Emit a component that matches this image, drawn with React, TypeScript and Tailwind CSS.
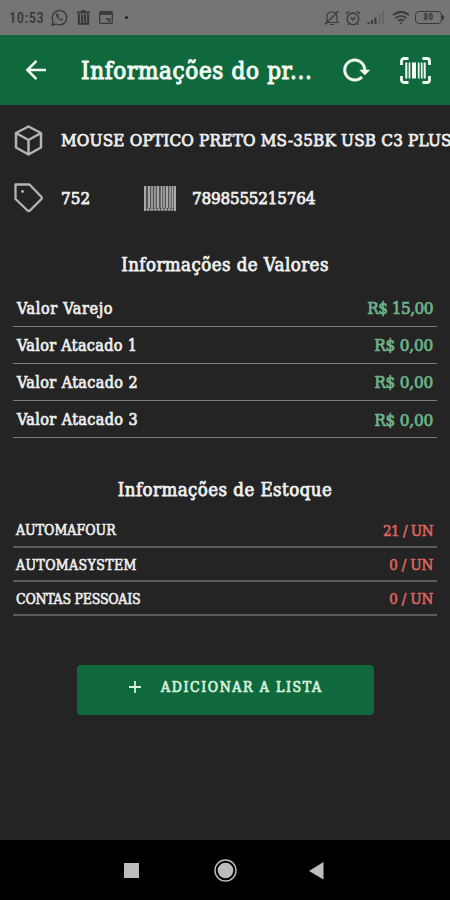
import { ReactNode } from 'react'

const prices = [
  { label: 'Valor Varejo', value: 'R$ 15,00', labelClass: 'tracking-[0.65px]', valueClass: 'tracking-[-0.5px]' },
  { label: 'Valor Atacado 1', value: 'R$ 0,00', labelClass: 'tracking-[0.35px]', valueClass: 'tracking-[-0.2px]' },
  { label: 'Valor Atacado 2', value: 'R$ 0,00', labelClass: 'tracking-[0.4px]', valueClass: 'tracking-[-0.2px]' },
  { label: 'Valor Atacado 3', value: 'R$ 0,00', labelClass: 'tracking-[0.4px]', valueClass: 'tracking-[-0.2px]' },
]

const stocks = [
  { label: 'AUTOMAFOUR', value: '21 / UN', labelClass: 'tracking-[0px]', valueClass: 'tracking-[-0.5px]' },
  { label: 'AUTOMASYSTEM', value: '0 / UN', labelClass: 'tracking-[0.35px]', valueClass: 'tracking-[-0.2px]' },
  { label: 'CONTAS PESSOAIS', value: '0 / UN', labelClass: 'tracking-[-0.25px]', valueClass: 'tracking-[-0.2px]' },
]

function StatusBar() {
  return (
    <div className="flex h-[35px] shrink-0 items-center bg-[#757575] pl-[9px] pr-[6px] text-[#393939]">
      <span className="w-[35px] whitespace-nowrap pt-[3px] font-[Roboto,sans-serif] text-[14.5px] font-medium leading-none tracking-[0.5px]">10:53</span>
      <svg className="ml-[7px] h-[17px] w-[17px]" viewBox="0 0 17 17" fill="none" stroke="currentColor" strokeWidth="1.3">
        <path d="M1 16l1.1-3.9A7.2 7.2 0 1 1 5 15z" />
        <path d="M5.8 4.6c-1.7 1.7.2 4.3 2.1 5.8 1.7 1.3 3.5 1.8 4.4.2l-1.7-1.2-1 .8c-1-.5-1.9-1.4-2.4-2.4l.8-.9-1-2.2z" fill="currentColor" stroke="none" />
      </svg>
      <svg className="ml-[9px] h-[15px] w-[13px]" viewBox="0 0 13 15" fill="none" stroke="currentColor">
        <path d="M0 2.5h13M4.5 1h4" strokeWidth="1.8" />
        <path d="M1.9 4v9.8h9.2V4M5 4.5v8M8 4.5v8" strokeWidth="2.1" />
      </svg>
      <svg className="ml-[9px] h-[13px] w-[14px]" viewBox="0 0 14 13" fill="none" stroke="currentColor">
        <rect x=".7" y=".7" width="12.6" height="11.6" rx="1" strokeWidth="1.3" />
        <path d="M1 2.5h12" strokeWidth="2.6" />
        <path d="M7 8h4.5M9 10h2.5" strokeWidth="1.5" />
      </svg>
      <span className="ml-[12px] h-[3px] w-[3px] rounded-full bg-[#222]" />
      <svg className="ml-auto h-[16px] w-[16px]" viewBox="0 0 16 16" fill="none" stroke="currentColor" strokeWidth="1.2">
        <path d="M1.5 12.5h11M3 12V7c0-3 2-5 5-5s5 2 5 5v5l1.5 1M6 14.5h4M14.5 1L1 14.5" />
      </svg>
      <svg className="ml-[5px] h-[16px] w-[16px]" viewBox="0 0 16 16" fill="none" stroke="currentColor" strokeWidth="1.3">
        <circle cx="8" cy="8.8" r="5.8" />
        <path d="M1 3.8L4 1.2M15 3.8L12 1.2M5.5 7.5L8 9.8l2.5-2.3M3.5 13.5L2.5 15M12.5 13.5l1 1.5" />
      </svg>
      <svg className="ml-[6px] h-[13px] w-[18px]" viewBox="0 0 18 13" stroke="currentColor" strokeWidth="2">
        <path d="M1.5 13v-2M5 13V9M8.5 13V6.5" />
        <path d="M12.5 13V3.5M16.2 13V0" opacity=".25" />
      </svg>
      <svg className="ml-[7px] h-[15px] w-[18px]" viewBox="0 0 18 15" fill="none" stroke="currentColor" strokeWidth="1.8">
        <path d="M1 5.2c4.6-4.3 11.4-4.3 16 0M3.6 8.2c3.2-2.8 7.6-2.8 10.8 0M6.2 10.9c1.7-1.4 3.9-1.4 5.6 0" />
        <circle cx="9" cy="13" r="1" fill="currentColor" stroke="none" />
      </svg>
      <div className="ml-[5px] flex h-[13px] w-[27px] items-center justify-center rounded-[4px] border-[1.5px] border-[#393939] font-[Roboto,sans-serif] text-[9px] font-bold leading-none tracking-[0.5px]">80</div>
      <span className="h-[5px] w-[2px] rounded-r bg-[#393939]" />
    </div>
  )
}

function Header() {
  return (
    <header className="flex h-[70px] shrink-0 items-center bg-[#10693c] text-[#f2fbf3]">
      <svg className="ml-[25px] h-[22px] w-[22px]" viewBox="0 0 22 22" fill="none" stroke="currentColor" strokeWidth="2.5">
        <path d="M21 11H2.5M11.5 1.8L2.3 11l9.2 9.2" />
      </svg>
      <h1 className="ml-[34px] w-[232px] whitespace-nowrap pt-px text-[24px] leading-none tracking-[0.64px] [-webkit-text-stroke:1px_currentColor]">
        Informações do pr...
      </h1>
      <svg className="ml-[28px] h-[30px] w-[30px]" viewBox="0 0 24 24" fill="currentColor" stroke="currentColor" strokeWidth=".4">
        <path d="M2 12C2 16.97 6.03 21 11 21C13.39 21 15.68 20.06 17.4 18.4L15.9 16.9C14.63 18.25 12.86 19 11 19C4.76 19 1.64 11.46 6.05 7.05C10.46 2.64 18 5.77 18 12H15L19 16H19.1L23 12H20C20 7.03 15.97 3 11 3C6.03 3 2 7.03 2 12Z" />
      </svg>
      <svg className="ml-[29px] h-[27px] w-[31px]" viewBox="0 0 31 27" fill="none" stroke="currentColor">
        <path d="M8.5 1.5H4a2.5 2.5 0 0 0-2.5 2.5v4M22.5 1.5H27a2.5 2.5 0 0 1 2.5 2.5v4M8.5 25.5H4A2.5 2.5 0 0 1 1.5 23v-4M22.5 25.5H27a2.5 2.5 0 0 0 2.5-2.5v-4" strokeWidth="2.8" />
        <path d="M6.3 5.5v16M24.7 5.5v16" strokeWidth="2" />
        <path d="M9.5 5.5v16M18.7 5.5v16M21.7 5.5v16" strokeWidth="1.7" />
        <path d="M14 5.5v16" strokeWidth="4" />
      </svg>
    </header>
  )
}

function SectionTitle({ children }: { children: ReactNode }) {
  return (
    <h2 className="whitespace-nowrap text-center text-[18.5px] leading-[23px] tracking-[0.45px] text-[#f0f0f0] [-webkit-text-stroke:0.75px_currentColor]">
      {children}
    </h2>
  )
}

export default function App() {
  return (
    <div className="flex h-[900px] w-[450px] flex-col overflow-hidden bg-[#242424] font-['DejaVu_Serif_Condensed','DejaVu_Serif',serif] [font-stretch:condensed]">
      <StatusBar />
      <Header />

      <main className="flex flex-1 flex-col text-[#eeeeee]">
        <div className="mt-[19px] flex h-[32px] items-center overflow-hidden pl-[14px]">
          <svg className="h-[31px] w-[29px] shrink-0 text-[#b4b4b4]" viewBox="0 0 29 31" fill="none" stroke="currentColor" strokeWidth="2.5" strokeLinejoin="round">
            <path d="M14.5 1.5L27 8v14.5l-12.5 7L2 22.5V8zM2 8l12.5 7L27 8M14.5 15v14" />
          </svg>
          <span className="ml-[18px] whitespace-nowrap pt-px text-[17px] leading-none tracking-[0.18px] [-webkit-text-stroke:0.75px_currentColor]">MOUSE OPTICO PRETO MS-35BK USB C3 PLUS</span>
        </div>

        <div className="mt-[26px] flex h-[32px] items-center pl-[14px] text-[17px] [-webkit-text-stroke:0.75px_currentColor]">
          <svg className="h-[30px] w-[30px] shrink-0 text-[#b4b4b4]" viewBox="0 0 30 30" fill="none" stroke="currentColor" strokeWidth="2.3" strokeLinejoin="round">
            <path d="M1.5 1.5h14L27.5 14a1.5 1.5 0 0 1 0 2L16 27.5a2 2 0 0 1-2.5 0L1.5 16z" />
            <circle cx="8.5" cy="8.5" r="1.4" fill="currentColor" stroke="none" />
          </svg>
          <span className="ml-[17px] w-[83px] pt-px">752</span>
          <svg className="h-[25px] w-[32px] shrink-0 text-[#a8a8a8]" viewBox="0 0 32 25" fill="none" stroke="currentColor">
            <path d="M0 0h32v25H0z" fill="currentColor" stroke="none" opacity=".35" />
            <path d="M1 0v25M31 0v25M5 0v22M14 0v22M23 0v22" strokeWidth="2" />
            <path d="M8 0v22M11 0v22M17.5 0v22M20 0v22M26 0v22M28.5 0v22" strokeWidth="1.5" />
            <path d="M3 23.5h26" strokeWidth="2" strokeDasharray="2.5 1" />
          </svg>
          <span className="ml-[16px] pt-px tracking-[-0.25px]">7898555215764</span>
        </div>

        <section className="mt-[39px]">
          <SectionTitle>Informações de Valores</SectionTitle>
          <div className="mt-[14px] px-[13px]">
            {prices.map((row) => (
              <div key={row.label} className="flex h-[37.1px] items-center justify-between border-b-[1.5px] border-[#7c7c7c] px-[4px] pt-[2px] text-[16px] [-webkit-text-stroke:0.7px_currentColor]">
                <span className={row.labelClass}>{row.label}</span>
                <span className={`text-[17px] text-[#6fb48c] ${row.valueClass}`}>{row.value}</span>
              </div>
            ))}
          </div>
        </section>

        <section className="mt-[39.5px]">
          <SectionTitle>Informações de Estoque</SectionTitle>
          <div className="mt-[13px] px-[13px]">
            {stocks.map((row) => (
              <div key={row.label} className="flex h-[34.2px] items-center justify-between border-b-2 border-[#5c5c5c] pl-[3px] pr-[4px] pt-[2px] text-[14px] [-webkit-text-stroke:0.6px_currentColor]">
                <span className={row.labelClass}>{row.label}</span>
                <span className={`text-[15px] text-[#dc6460] ${row.valueClass}`}>{row.value}</span>
              </div>
            ))}
          </div>
        </section>

        <button className="mt-[49px] ml-[77px] flex h-[50px] w-[297px] items-center rounded-[4px] bg-[#10693c] pb-[6px] pl-[51px] text-[#d5f0dc]">
          <svg className="h-[14px] w-[14px]" viewBox="0 0 14 14" stroke="currentColor" strokeWidth="1.8">
            <path d="M7 1v12M1 7h12" />
          </svg>
          <span className="ml-[19px] whitespace-nowrap text-[14px] leading-none tracking-[1.6px] [-webkit-text-stroke:0.7px_currentColor]">ADICIONAR A LISTA</span>
        </button>
      </main>

      <nav className="flex h-[60px] shrink-0 items-center bg-black pl-[124px] pt-px text-[#bdbdbd]">
        <span className="h-[15px] w-[15px] bg-[#bdbdbd]" />
        <svg className="ml-[75px] h-[23px] w-[23px]" viewBox="0 0 23 23">
          <circle cx="11.5" cy="11.5" r="10.5" fill="none" stroke="currentColor" strokeWidth="1.4" />
          <circle cx="11.5" cy="11.5" r="7.8" fill="currentColor" />
        </svg>
        <svg className="ml-[72px] h-[18px] w-[15px]" viewBox="0 0 15 18" fill="currentColor">
          <path d="M14.5 0v17.5L0 9z" />
        </svg>
      </nav>
    </div>
  )
}
